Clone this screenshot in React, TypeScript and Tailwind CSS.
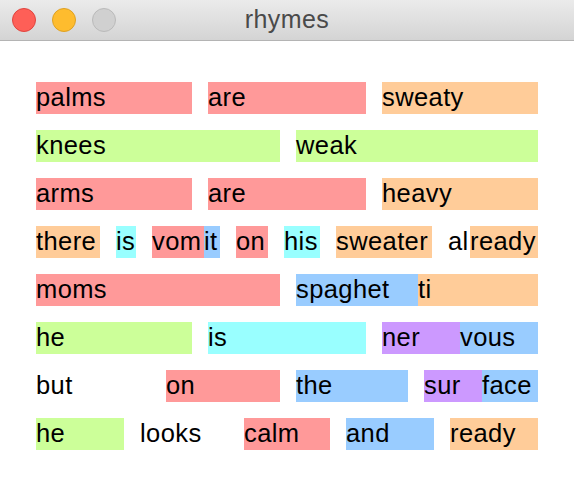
type Seg = { t: string; c: string; w: string }

const red = "bg-[#ff9999]"
const orange = "bg-[#ffcc99]"
const green = "bg-[#ccff99]"
const cyan = "bg-[#99ffff]"
const blue = "bg-[#99ccff]"
const purple = "bg-[#cc99ff]"
const none = ""

// each row is a list of words, each word is a list of colored syllables
const rows: Seg[][][] = [
    [
        [{ t: "palms", c: red, w: "w-[156px]" }],
        [{ t: "are", c: red, w: "w-[158px]" }],
        [{ t: "sweaty", c: orange, w: "w-[156px]" }],
    ],
    [
        [{ t: "knees", c: green, w: "w-[244px]" }],
        [{ t: "weak", c: green, w: "w-[242px]" }],
    ],
    [
        [{ t: "arms", c: red, w: "w-[156px]" }],
        [{ t: "are", c: red, w: "w-[158px]" }],
        [{ t: "heavy", c: orange, w: "w-[156px]" }],
    ],
    [
        [{ t: "there", c: orange, w: "w-[64px]" }],
        [{ t: "is", c: cyan, w: "w-[20px]" }],
        [
            { t: "vom", c: red, w: "w-[52px]" },
            { t: "it", c: blue, w: "w-[16px]" },
        ],
        [{ t: "on", c: red, w: "w-[32px]" }],
        [{ t: "his", c: cyan, w: "w-[36px]" }],
        [{ t: "sweater", c: orange, w: "w-[96px]" }],
        [
            { t: "al", c: none, w: "w-[22px]" },
            { t: "ready", c: orange, w: "w-[68px]" },
        ],
    ],
    [
        [{ t: "moms", c: red, w: "w-[244px]" }],
        [
            { t: "spaghet", c: blue, w: "w-[122px]" },
            { t: "ti", c: orange, w: "w-[120px]" },
        ],
    ],
    [
        [{ t: "he", c: green, w: "w-[156px]" }],
        [{ t: "is", c: cyan, w: "w-[158px]" }],
        [
            { t: "ner", c: purple, w: "w-[78px]" },
            { t: "vous", c: blue, w: "w-[78px]" },
        ],
    ],
    [
        [{ t: "but", c: none, w: "w-[114px]" }],
        [{ t: "on", c: red, w: "w-[114px]" }],
        [{ t: "the", c: blue, w: "w-[112px]" }],
        [
            { t: "sur", c: purple, w: "w-[58px]" },
            { t: "face", c: blue, w: "w-[56px]" },
        ],
    ],
    [
        [{ t: "he", c: green, w: "w-[88px]" }],
        [{ t: "looks", c: none, w: "w-[88px]" }],
        [{ t: "calm", c: red, w: "w-[86px]" }],
        [{ t: "and", c: blue, w: "w-[88px]" }],
        [{ t: "ready", c: orange, w: "w-[88px]" }],
    ],
]

const TitleBar = () => {
    return <div className="h-[41px] flex items-center relative bg-gradient-to-b from-[#ebebeb] to-[#d4d4d4] border-b border-[#b4b4b4]">
        <div className="flex items-center gap-4 pl-3">
            <div className="size-[24px] rounded-full bg-[#fe5f57] border border-[#e0443e]"></div>
            <div className="size-[24px] rounded-full bg-[#febc2e] border border-[#dea123]"></div>
            <div className="size-[24px] rounded-full bg-[#d0d0d0] border border-[#bababa]"></div>
        </div>
        <div className="absolute inset-0 flex items-center justify-center text-[25px] tracking-[0.4px] text-[#4a4a4a]">
            rhymes
        </div>
    </div>
}

export default function App() {
    return <div className="w-[574px] h-[482px] bg-white font-['Liberation_Sans',Arial,sans-serif] overflow-hidden">
        <TitleBar />

        <div className="pt-[41px] pl-[36px] flex flex-col gap-4">
            {rows.map((row, i) => (
                <div key={i} className="flex gap-4 h-[32px]">
                    {row.map((word, j) => (
                        <div key={j} className="flex">
                            {word.map((s, k) => (
                                <div key={k} className={`${s.w} ${s.c} h-[32px] leading-[31px] text-[25.5px] tracking-[0.4px] text-black whitespace-nowrap`}>
                                    {s.t}
                                </div>
                            ))}
                        </div>
                    ))}
                </div>
            ))}
        </div>
    </div>
}
